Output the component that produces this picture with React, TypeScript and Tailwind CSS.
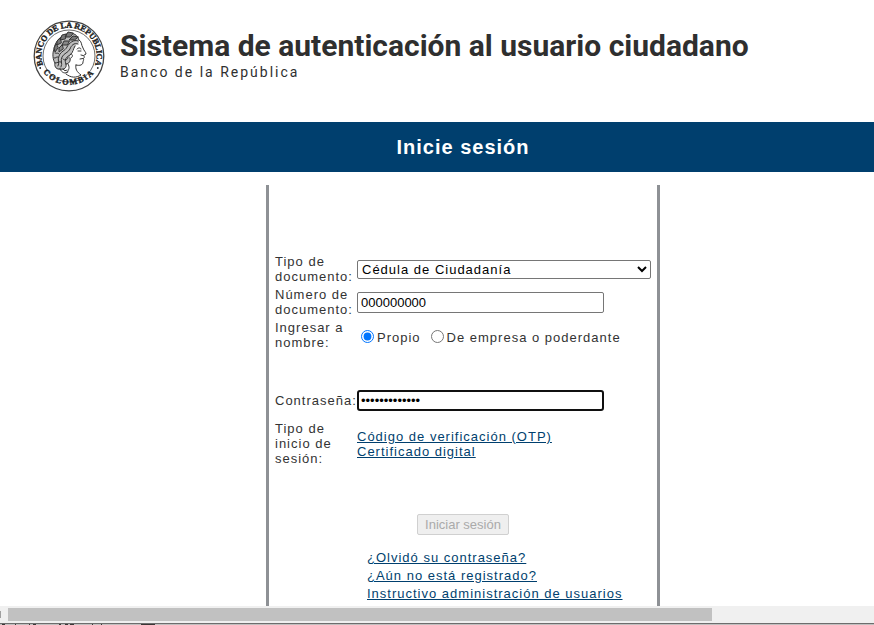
import React, { useState } from "react";

const documentTypes = [
  "Cédula de Ciudadanía",
  "Cédula de Extranjería",
  "Tarjeta de Identidad",
  "Pasaporte",
];

const helpLinks = [
  "¿Olvidó su contraseña?",
  "¿Aún no está registrado?",
  "Instructivo administración de usuarios",
];

const linkClass = "text-[#003f6e] underline underline-offset-1";

function Seal() {
  return (
    <svg
      viewBox="0 0 72 72"
      className="w-[72px] h-[72px] shrink-0"
      role="img"
      aria-label="Banco de la República"
    >
      <defs>
        <path id="seal-top" d="M 10.5 46 A 27.6 27.6 0 1 1 61.5 46" />
        <path id="seal-bottom" d="M 7.3 48 A 33 33 0 0 0 64.7 48" />
      </defs>
      <g fill="none" stroke="#444">
        <circle cx="36" cy="36" r="34.8" strokeWidth="1.3" />
        <circle cx="36" cy="36" r="26" strokeWidth="0.8" />
      </g>
      <g
        fill="#1f1f1f"
        stroke="#1f1f1f"
        strokeWidth="0.4"
        fontFamily="'Liberation Serif', serif"
        fontWeight="700"
        fontSize="8.2"
        letterSpacing="0"
        textAnchor="middle"
      >
        <text>
          <textPath href="#seal-top" startOffset="50%">
            BANCO DE LA REPUBLICA
          </textPath>
        </text>
        <text letterSpacing="1.6">
          <textPath href="#seal-bottom" startOffset="50%">
            COLOMBIA
          </textPath>
        </text>
      </g>
      <circle cx="7.2" cy="48" r="0.9" fill="#222" />
      <circle cx="64.8" cy="48" r="0.9" fill="#222" />
      <g
        fill="none"
        stroke="#333"
        strokeWidth="1"
        strokeLinecap="round"
        strokeLinejoin="round"
      >
        {/* tone behind the hair */}
        <path
          d="M46 20 C45 15 40 12 34 14 C27 16 22 22 21 29 C19 34 20 40 22 43 C21 47 24 50 27 49 C31 51 34 48 33 44 C36 44 38 41 37 37 C38 32 41 26 46 23 Z"
          fill="#bdbdbd"
          stroke="none"
        />
        {/* crown of the head and laurel leaves */}
        <path d="M46 20 C45 15 40 12 34 14 C27 16 22 22 21 29 C19 34 20 40 22 43 C21 47 24 50 27 49" />
        <path d="M45 17 L40 16 L36 20 L41 20 Z M40 13 L35 12 L32 17 L37 17 Z M33 14 L29 15 L27 20 L32 19 Z M27 18 L24 21 L24 25 L28 23 Z M23 24 L21 28 L22 32 L25 28 Z" fill="#777" />
        <path d="M36 21 L31 21 L29 25 L34 25 Z M29 25 L26 28 L26 32 L30 29 Z" fill="#888" />
        {/* waves of hair */}
        <path d="M45 21 C41 19 36 23 34 27 C32 31 28 31 26 36 C24 40 27 43 25 46" />
        <path d="M45 24 C41 22 38 26 37 29 C35 33 31 33 29 37 C27 41 30 43 28 47" />
        <path d="M42 26 C40 29 40 33 37 35 C33 37 31 40 33 44" />
        <path d="M22 33 C24 34 25 32 26 34 M21 38 C23 39 23 36 25 37 M22 43 C25 43 26 41 28 42" />
        <path d="M33 44 C36 44 38 41 37 38 M30 39 C32 41 35 40 35 37 M27 49 C31 50 34 48 33 44" />
        <path d="M27 49 C29 53 32 54 35 52 M30 49 C31 51 33 51 34 50" />
        {/* profile */}
        <path d="M46 20 C49 21 48 25 50 28 C51 31 53 32 53 34 L50.5 35.5 C52 37 51 38 50.5 38.5 C51 40 50 41 50 42 C50 45 47 46 43 45" />
        <path d="M43 45 C42 49 44 52 48 55 C43 58 38 58 33 54 M35 44 C37 47 36 50 34 52" />
        <path d="M44 29 C46 27 48 28 48 29 M45 31 L48 31 M47 39 L50 38.5 M48 35 L50 35.5 M38 34 C40 34 40 37 38 38" />
      </g>
    </svg>
  );
}

function WindowEdge() {
  return (
    <div className="shrink-0" aria-hidden="true">
      <div className="h-[17px] bg-[#f0f0f0] flex items-center">
        <div className="h-[7px] w-px bg-[#a0a0a0]" />
        <div className="ml-[7px] mr-[162px] h-[13px] flex-1 bg-[#c1c1c1]" />
      </div>
      <div className="h-px bg-[#6d6d6d]" />
      <svg className="block h-px w-full bg-[#c2bfbf]">
        <g fill="#3a3636">
          <rect x="2" width="3" height="1" />
          <rect x="15" width="1" height="1" />
          <rect x="29" width="1" height="1" />
          <rect x="33" width="3" height="1" />
          <rect x="59" width="2" height="1" />
          <rect x="65" width="3" height="1" />
          <rect x="70" width="4" height="1" />
          <rect x="92" width="1" height="1" />
          <rect x="101" width="1" height="1" />
          <rect x="141" width="14" height="1" />
        </g>
      </svg>
    </div>
  );
}

export default function App() {
  const [documentType, setDocumentType] = useState(documentTypes[0]);
  const [documentNumber, setDocumentNumber] = useState("000000000");
  const [actingFor, setActingFor] = useState("propio");
  const [password, setPassword] = useState("contrasena123");

  return (
    <div className="h-screen flex flex-col overflow-hidden bg-white font-['Liberation_Sans',Arial,sans-serif] text-[13px] leading-[15px] tracking-[1px] text-[#333]">
      <div className="flex-1 min-h-0 overflow-hidden">
        <header className="flex items-start pl-[33px] pt-5 pb-[30px] font-[Roboto,sans-serif] tracking-normal text-[#2f2f2f]">
          <Seal />
          <div className="pl-[15px] pt-2">
            <h1 className="text-[30px] leading-9 font-bold whitespace-nowrap">
              Sistema de autenticación al usuario ciudadano
            </h1>
            <p className="text-[14px] leading-4 tracking-[2px]">
              Banco de la República
            </p>
          </div>
        </header>

        <div className="bg-[#003f6e] pl-[52px] py-[10px] text-center">
          <h2 className="text-[20px] leading-[30px] font-bold text-white">
            Inicie sesión
          </h2>
        </div>

        <main className="pl-[52px] pt-[13px] flex justify-center">
          <form
            className="w-[394px] border-x-3 border-[#8e9195] pt-[69px] pb-10 px-[6px]"
            onSubmit={(e) => e.preventDefault()}
          >
            <div className="grid grid-cols-[82px_1fr] items-center gap-y-[3px]">
              <label htmlFor="document-type">Tipo de documento:</label>
              <select
                id="document-type"
                value={documentType}
                onChange={(e) => setDocumentType(e.target.value)}
                className="h-[19px] w-full rounded-xs border border-[#767676] bg-white text-black"
              >
                {documentTypes.map((type) => (
                  <option key={type}>{type}</option>
                ))}
              </select>

              <label htmlFor="document-number">Número de documento:</label>
              <input
                id="document-number"
                type="text"
                value={documentNumber}
                onChange={(e) => setDocumentNumber(e.target.value)}
                className="h-[21px] w-[247px] rounded-xs border border-[#767676] px-[3px] tracking-normal text-black"
              />

              <span id="acting-for">Ingresar a nombre:</span>
              <div
                role="radiogroup"
                aria-labelledby="acting-for"
                className="flex items-center gap-[10px] pl-1 pt-1"
              >
                <label className="flex items-start gap-[3px]">
                  <input
                    type="radio"
                    name="acting-for"
                    checked={actingFor === "propio"}
                    onChange={() => setActingFor("propio")}
                    className="size-[13px]"
                  />
                  Propio
                </label>
                <label className="flex items-start gap-[3px]">
                  <input
                    type="radio"
                    name="acting-for"
                    checked={actingFor === "empresa"}
                    onChange={() => setActingFor("empresa")}
                    className="size-[13px]"
                  />
                  De empresa o poderdante
                </label>
              </div>
            </div>

            <div className="mt-10 grid grid-cols-[82px_1fr] items-center gap-y-[10px]">
              <label htmlFor="password">Contraseña:</label>
              <input
                id="password"
                type="password"
                value={password}
                onChange={(e) => setPassword(e.target.value)}
                className="h-[21px] w-[247px] rounded-[3px] border-2 border-[#101010] px-[2px] tracking-normal text-black outline-none"
              />

              <span>Tipo de inicio de sesión:</span>
              <div className="flex flex-col items-start">
                <a href="#otp" className={linkClass}>
                  Código de verificación (OTP)
                </a>
                <a href="#certificado" className={linkClass}>
                  Certificado digital
                </a>
              </div>
            </div>

            <div className="mt-12 text-center">
              <button
                type="submit"
                disabled
                className="h-[21px] rounded-xs border border-[#d0d0d0] bg-[#efefef] px-[7px] tracking-normal text-[#aaa]"
              >
                Iniciar sesión
              </button>
            </div>

            <ul className="mt-[14px] pl-[92px] leading-[18px]">
              {helpLinks.map((text) => (
                <li key={text}>
                  <a href="#ayuda" className={linkClass}>
                    {text}
                  </a>
                </li>
              ))}
            </ul>
          </form>
        </main>
      </div>
      <WindowEdge />
    </div>
  );
}
